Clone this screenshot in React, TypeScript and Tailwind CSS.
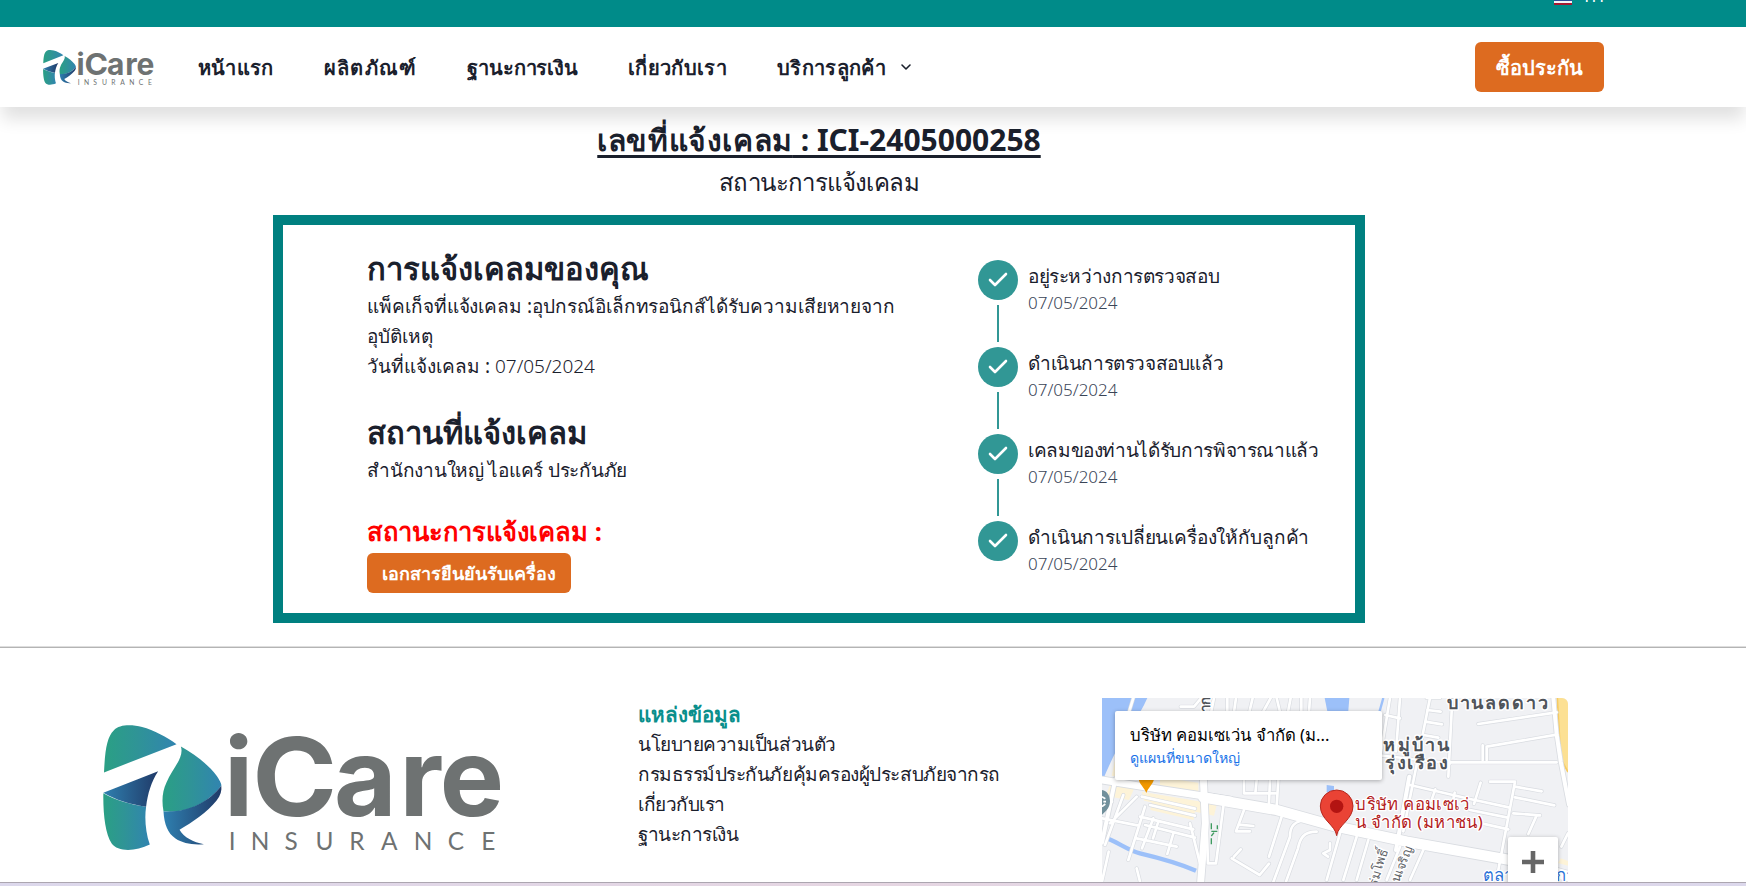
import { Check, ChevronDown } from 'lucide-react';

const steps = [
  { title: 'อยู่ระหว่างการตรวจสอบ', date: '07/05/2024', tracking: 'tracking-[-0.38px]' },
  { title: 'ดำเนินการตรวจสอบแล้ว', date: '07/05/2024', tracking: 'tracking-[-0.4px]' },
  { title: 'เคลมของท่านได้รับการพิจารณาแล้ว', date: '07/05/2024', tracking: 'tracking-[-0.36px]' },
  { title: 'ดำเนินการเปลี่ยนเครื่องให้กับลูกค้า', date: '07/05/2024', tracking: 'tracking-[-0.15px]' },
];

const resources = [
  'นโยบายความเป็นส่วนตัว',
  'กรมธรรม์ประกันภัยคุ้มครองผู้ประสบภัยจากรถ',
  'เกี่ยวกับเรา',
  'ฐานะการเงิน',
];

function Logo({ id, className }: { id: string; className: string }) {
  return (
    <svg viewBox="68 75 1197 375" className={className} preserveAspectRatio="none" role="img">
      <defs>
        <linearGradient id={`${id}-light`} x1="0" x2="1">
          <stop offset="0" stopColor="#2aa084" />
          <stop offset="0.45" stopColor="#2f9496" />
          <stop offset="1" stopColor="#3184b0" />
        </linearGradient>
        <linearGradient id={`${id}-dark`} x1="0" x2="1">
          <stop offset="0" stopColor="#2f80b0" />
          <stop offset="1" stopColor="#203a68" />
        </linearGradient>
      </defs>
      <path d="M71 216C74 150 80 110 100 91C118 72 155 74 185 81C220 90 260 112 288 132Z" fill={`url(#${id}-light)`} />
      <path d="M69 278C68 340 75 400 94 428C112 453 165 452 208 431C195 395 192 350 197 318C150 312 105 298 69 278Z" fill={`url(#${id}-light)`} />
      <path d="M69 277L233 213C212 245 202 280 197 318C150 312 105 298 69 277Z" fill={`url(#${id}-dark)`} />
      <path d="M301 139C345 163 385 195 408 226C418 240 424 254 422 256C385 305 320 340 249 332C243 300 246 270 258 246C275 205 312 172 301 139Z" fill={`url(#${id}-light)`} />
      <path d="M422 256C385 305 320 337 249 332C251 370 262 398 285 413C306 427 335 433 370 430C338 424 310 410 297 387C335 365 380 335 408 300C420 285 424 270 422 256Z" fill={`url(#${id}-dark)`} />
      <g fontSize="323" fontWeight="700" fontFamily="Inter, sans-serif" fill="#6e7272">
        <text x="430" y="345">i</text>
        <text x="515" y="345" textLength="254" lengthAdjust="spacingAndGlyphs">C</text>
        <text y="345" x="759 955 1076">are</text>
      </g>
      <text y="447" x="444 510 611 704 805 900 998 1100 1200" fontSize="73" fontFamily="Lato, sans-serif" fill="#6e7272">INSURANCE</text>
    </svg>
  );
}

function Header() {
  return (
    <header className="relative z-10">
      <div className="flex h-[27px] items-start justify-end overflow-hidden bg-[#008b89] pr-[142px] text-white">
        <div className="-mt-[19px] flex h-[30px] items-center gap-[10px] text-[17px] leading-[30px]">
          <svg viewBox="0 0 18 12" className="mt-[12px] h-[12px] w-[18px] self-start">
            <path fill="#a51931" d="M0 0h18v12H0z" />
            <path fill="#f4f5f8" d="M0 2h18v8H0z" />
            <path fill="#2d4a9a" d="M0 4h18v4H0z" />
          </svg>
          <span>TH</span>
        </div>
      </div>
      <div className="flex h-[80px] items-center bg-white pl-[43px] pr-[142px] shadow-[0_14px_16px_-2px_rgba(0,0,0,0.12)]">
        <Logo id="nav" className="h-[35px] w-[111px] shrink-0" />
        <nav className="ml-[44px] flex items-center pt-[2px] text-[20px] font-semibold leading-[30px] whitespace-nowrap">
          <a className="w-[126px] tracking-[0.2px]">หน้าแรก</a>
          <a className="w-[143px] tracking-[1.2px]">ผลิตภัณฑ์</a>
          <a className="w-[161px] tracking-[-0.1px]">ฐานะการเงิน</a>
          <a className="w-[149px] tracking-[0.35px]">เกี่ยวกับเรา</a>
          <a className="flex items-center tracking-[0.35px]">
            บริการลูกค้า
            <ChevronDown className="mb-[2px] ml-[12px] size-[16px]" strokeWidth={2.4} />
          </a>
        </nav>
        <button className="ml-auto h-[50px] w-[129px] rounded-md bg-[#dd6b20] pt-[1px] text-[20px] font-bold text-white">ซื้อประกัน</button>
      </div>
    </header>
  );
}

function ClaimDetails() {
  return (
    <div className="w-[611px] shrink-0">
      <div className="w-[540px]">
        <h2 className="h-[42px] text-[30.9px] font-bold leading-[38px] whitespace-nowrap">การแจ้งเคลมของคุณ</h2>
        <p className="text-[19px] leading-[30px] tracking-[-0.06px]">
          แพ็คเก็จที่แจ้งเคลม :อุปกรณ์อิเล็กทรอนิกส์ได้รับความเสียหายจาก
          <br />
          อุบัติเหตุ
        </p>
        <p className="text-[19px] leading-[30px]">
          วันที่แจ้งเคลม : <span className="font-light">07/05/2024</span>
        </p>
      </div>
      <div className="mt-[32px]">
        <h2 className="h-[42px] text-[30.9px] font-bold leading-[38px]">สถานที่แจ้งเคลม</h2>
        <p className="text-[19px] leading-[30px] tracking-[-0.25px]">สำนักงานใหญ่ ไอแคร์ ประกันภัย</p>
      </div>
      <div className="mt-[28px]">
        <h3 className="h-[36px] text-[25.5px] font-bold leading-[36px] text-[#ff0000]">สถานะการแจ้งเคลม :</h3>
        <button className="mt-[4px] h-[40px] w-[204px] rounded-md bg-[#dd6b20] text-[18px] font-bold text-white">เอกสารยืนยันรับเครื่อง</button>
      </div>
    </div>
  );
}

function Stepper() {
  return (
    <ol className="mt-[11px] flex flex-col">
      {steps.map((s, i) => (
        <li key={s.title} className="flex h-[87px] gap-[10px]">
          <div className="flex w-[40px] flex-col items-center">
            <span className="flex size-[40px] shrink-0 items-center justify-center rounded-full bg-[#319795] text-white">
              <Check className="size-[24px]" strokeWidth={2.6} />
            </span>
            {i < steps.length - 1 && <span className="mt-[5px] h-[37px] w-[2px] bg-[#319795]" />}
          </div>
          <div className="whitespace-nowrap pt-[1px]">
            <h4 className={`h-[28px] text-[19px] leading-[30px] ${s.tracking}`}>{s.title}</h4>
            <p className="text-[17px] font-light leading-[28px] text-[#3a4557]">{s.date}</p>
          </div>
        </li>
      ))}
    </ol>
  );
}

function StreetMap() {
  return (
    <svg viewBox="36 24 1398 552" className="h-full w-full" preserveAspectRatio="none">
      <path fill="#f0f1f4" d="M36 24h1398v552H36z" />
      <g fill="#9cc0f9">
        <path d="M36 24H172C145 85 105 135 80 180C65 210 48 245 36 278Z" />
        <path d="M704 24h74l-4 50h-60z" />
      </g>
      <g fill="none" stroke="#9cc0f9">
        <path strokeWidth="13" d="M36 440C80 452 110 480 150 490C205 503 255 515 318 542" />
        <path strokeWidth="7" d="M880 24l-14 50" />
      </g>
      <g fill="#fdf3d8">
        <path d="M60 285l75 5-18 40-70-12z" />
        <path d="M75 210l40 55-50-8z" />
        <path d="M155 305l180 30 45 10-8 32-210-45z" />
        <path d="M210 262l115 16v42l-115-20z" />
        <path d="M185 335l130 25-4 30-130-30z" />
        <path d="M1412 505l22 8v14l-30-8z" />
      </g>
      <path d="M1402 24h32v222l-24-40z" fill="#fce093" />
      <path d="M1402 24l10 182 22 40" fill="none" stroke="#f6cb63" strokeWidth="5" />
      {(['#d9dce1', '#ffffff'] as const).map((c, i) => (
        <g key={c} fill="none" stroke={c} strokeLinecap="round" strokeLinejoin="round">
          <g strokeWidth={i ? 8 : 12}>
            <path d="M130 24l-12 39M272 50h40l22-26M372 24l-8 40M412 24v42M438 24l-6 42M488 24l-10 42M520 64l22-40M560 24l10 42M602 24l-8 42M634 24v38M660 24l-3 42" />
            <path d="M155 320l160 36M180 345l135 32M36 385l110 22M150 380l160 38M165 405l150 38M140 445l120 25M60 400l80-80M100 315l-55 150M165 350l-50 160M190 385l-34 90M250 430l-18 62M205 395l-16 50M300 400l30 120" />
            <path d="M400 350l-22 170M350 400l4 120h24M500 270l-4 40h60M540 270l-4 90M565 270l-6 95M462 270v40h34M36 335h30" />
            <path d="M462 360l-24 64h42M448 404l42 4M425 505l84 50 28-34M432 500l20-22M575 380l-38 120M660 390c-50 0-60 20-60 50l-50 136M680 425c-40 0-50 20-56 50l-36 100" />
            <path d="M36 575l20-90M150 575l-10-40M700 490l20-10v-20M700 490l14 10" />
            <path d="M750 430l-40 140M800 440l-40 130M835 450l-35 120M930 470l-40 100M1000 480l-40 90" />
            <path d="M885 75l45 10M900 24l-30 180M930 24l-12 160M1020 24l-80 400M1012 60l40 5M1006 95l50 8M1000 135l45 8M1050 24h-40M860 195l220 25" />
            <path d="M1087 24l-12 236M1080 217h320M1165 102l235-35M1190 210v-40l210-36M1178 210v-44M960 285l180 42 120 26M1036 298l-12 34M1094 308l-10 46M1200 275h75l-50 265M1275 290l80 14M1275 322l118 24M1270 370l80 6M1340 376l-25 56M1140 360l110 22M1175 400l80 18M1172 278l-20 64M1434 430l-20 40" />
          </g>
          <g strokeWidth={i ? 12 : 17}>
            <path d="M1390 24l10 110 12 80 25 130" />
            <path d="M958 260l-40 220M36 458l40-190" />
          </g>
          <g strokeWidth={i ? 21 : 26}>
            <path d="M340 262L346 400 332 576M36 270L210 298 420 330" />
          </g>
          <path strokeWidth={i ? 31 : 36} d="M340 322L560 360 740 410 950 455 1260 510 1440 560" />
        </g>
      ))}
      <path d="M710 285l22 3v25l-22-6z" fill="#9cc0f9" />
      <path d="M364 400v24h18v-18M372 428l-8 10M364 445v22" fill="none" stroke="#3f9b60" strokeWidth="4" strokeDasharray="18 6" />
      <path d="M146 268h46c-4 16-17 25-23 41c-6-16-20-25-23-41z" fill="#f29900" />
      <path d="M36 300c15 2 24 16 24 34c0 22-16 33-24 40z" fill="#71909b" />
      <path d="M36 320l10 6M36 350l10-8M40 335h8" stroke="#fff" strokeWidth="5" />
      <path d="M740 437c-4-32-49-48-49-89a49 48 0 0 1 98 0c0 41-45 57-49 89z" fill="#ea4335" stroke="#b5271e" strokeWidth="3" />
      <circle cx="740" cy="349" r="20" fill="#b31412" />
      <g fontFamily='"Noto Sans", sans-serif' stroke="#fff" strokeWidth="8" paintOrder="stroke" strokeLinejoin="round">
        <g fill="#4f545a" fontSize="54" fontWeight="600">
          <text x="1070" y="56" textLength="304">บ้านลดดาว</text>
          <text x="880" y="184" textLength="198">หมู่บ้าน</text>
          <text x="886" y="236" textLength="188">รุ่งเรือง</text>
          <text transform="translate(360 66) rotate(-90)" fontSize="40">าก</text>
        </g>
        <g fill="#5f6368" fontSize="38">
          <text transform="translate(862 590) rotate(-74)">ร่มโพธิ์</text>
          <text transform="translate(928 580) rotate(-70)">นเจริญ</text>
        </g>
        <g fill="#b3201c" fontSize="50">
          <text x="796" y="360" textLength="342">บริษัท คอมเซเว่</text>
          <text x="796" y="413" textLength="382">น จำกัด (มหาชน)</text>
        </g>
        <g fill="#2b73d8" fontSize="50">
          <text x="1180" y="574">ตลาด</text>
          <text x="1398" y="574">การ</text>
        </g>
      </g>
    </svg>
  );
}

function Footer() {
  return (
    <footer className="flex h-[234px] shrink-0 overflow-hidden">
      <div className="w-[638px] shrink-0 pl-[103px] pt-[77px]">
        <Logo id="foot" className="h-[126px] w-[400px]" />
      </div>
      <div className="w-[464px] shrink-0 pt-[51px] whitespace-nowrap">
        <h5 className="h-[30px] text-[20.6px] font-bold leading-[30px] text-[#0a8f8c]">แหล่งข้อมูล</h5>
        <ul className="text-[19px] leading-[30px] tracking-[-0.46px]">
          {resources.map((r) => (
            <li key={r}>{r}</li>
          ))}
        </ul>
      </div>
      <div className="relative mt-[50px] h-[184px] w-[466px] overflow-hidden rounded-tr-md">
        <StreetMap />
        <div className="absolute left-[13px] top-[13px] h-[69px] w-[267px] rounded-[2px] bg-white pl-[15px] pt-[11px] whitespace-nowrap shadow-[0_1px_4px_rgba(0,0,0,0.3)]">
          <p className="text-[16.7px] leading-[26px] text-black">บริษัท คอมเซเว่น จำกัด (ม...</p>
          <p className="text-[14.2px] leading-[20px] text-[#1a73e8]">ดูแผนที่ขนาดใหญ่</p>
        </div>
        <div className="absolute left-[406px] top-[139px] h-[50px] w-[50px] rounded-[2px] bg-white shadow-[0_1px_4px_rgba(0,0,0,0.3)]">
          <svg viewBox="0 0 50 50" className="size-[50px]">
            <path d="M14 25h22M25 14v22" stroke="#666" strokeWidth="4.6" />
          </svg>
        </div>
      </div>
    </footer>
  );
}

export default function App() {
  return (
    <div className="flex h-[886px] w-[1746px] flex-col overflow-hidden bg-white font-['Noto_Sans',sans-serif] text-[#1a202c]">
      <Header />
      <main className="flex h-[539px] shrink-0 flex-col pl-[273px]">
        <div className="flex w-[1092px] flex-col items-center pt-[10px]">
          <h1 className="h-[47px] text-[30px] font-bold leading-[45px] underline decoration-[3px] underline-offset-[4px]">
            <span className="tracking-[0.6px]">เลขที่แจ้งเคลม</span> : ICI-2405000258
          </h1>
          <p className="h-[36px] text-[24px] leading-[36px] tracking-[-0.6px]">สถานะการแจ้งเคลม</p>
        </div>
        <section className="mt-[15px] flex h-[408px] w-[1092px] shrink-0 border-[10px] border-[#008080] pl-[84px] pt-[24px]">
          <ClaimDetails />
          <Stepper />
        </section>
      </main>
      <hr className="h-[2px] shrink-0 border-0 border-t border-[#dedede] bg-[#b4b4b4]" />
      <Footer />
      <div className="h-[4px] shrink-0 border-t border-[#aca6b0] bg-gradient-to-r from-[#dcd8ec] via-[#e6d6e2] to-[#dcd8ec]" />
    </div>
  );
}
